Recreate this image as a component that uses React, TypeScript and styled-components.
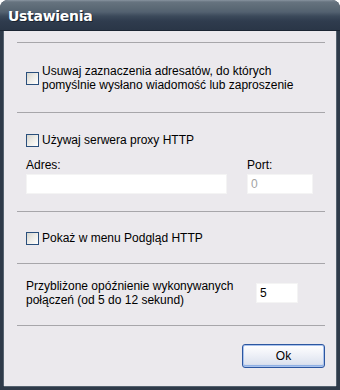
import React from "react";
import styled, { createGlobalStyle } from "styled-components";

const Global = createGlobalStyle`
  html, body { margin: 0; padding: 0; background: #ffffff; }
  body { font-family: "Liberation Sans", Arial, sans-serif; font-size: 12px; color: #000; }
  * { box-sizing: border-box; }
`;

const Window = styled.div`
  width: 340px;
  height: 390px;
  display: flex;
  flex-direction: column;
  background: #2e3a49;
  border-radius: 8px 8px 0 0;
  overflow: hidden;
`;

const TitleBar = styled.div`
  height: 31px;
  flex: none;
  display: flex;
  align-items: center;
  padding: 1px 0 0 8px;
  background: linear-gradient(
    to bottom,
    #8894a0 0px,
    #66737f 2px,
    #5b6975 8px,
    #536170 12px,
    #3c4a5b 16px,
    #2f3c4e 21px,
    #2a3647 30px
  );
  border-bottom: 1px solid #1b2532;
`;

const Title = styled.span`
  font-family: "DejaVu Sans", "Liberation Sans", sans-serif;
  font-weight: bold;
  font-size: 14px;
  letter-spacing: -0.3px;
  color: #ffffff;
  text-shadow: 1px 1px 0 #1a2330;
`;

const Body = styled.div`
  flex: 1;
  margin: 0 4px 4px 4px;
  background: #ebe9ed;
  box-shadow: -1px 0 0 #55626f, 1px 0 0 #55626f, 0 1px 0 #55626f;
  display: flex;
  flex-direction: column;
  padding: 11px 10px 0 13px;
`;

const Separator = styled.div<{ $top: number }>`
  height: 1px;
  background: #a7a6aa;
  margin-top: ${(p) => p.$top}px;
  margin-right: 1px;
  flex: none;
`;

const CheckRow = styled.label<{ $top: number }>`
  display: flex;
  align-items: center;
  gap: 3px;
  margin: ${(p) => p.$top}px 0 0 9px;
  line-height: 14px;
`;

const Box = styled.span`
  width: 13px;
  height: 13px;
  flex: none;
  border: 1px solid #2a4f7c;
  background: linear-gradient(135deg, #d4d4ce 0%, #ecebe6 45%, #ffffff 100%);
`;

const Text = styled.span`
  line-height: 14px;
`;

const FieldGrid = styled.div`
  display: grid;
  grid-template-columns: 201px 66px;
  column-gap: 20px;
  row-gap: 2px;
  margin: 11px 0 0 9px;
`;

const FieldLabel = styled.span`
  line-height: 14px;
`;

const Input = styled.div<{ $disabled?: boolean }>`
  height: 20px;
  background: #ffffff;
  border: 1px solid #f4f4f4;
  padding-left: 3px;
  display: flex;
  align-items: center;
  color: ${(p) => (p.$disabled ? "#a3a3a3" : "#000")};
`;

const DelayRow = styled.div`
  display: flex;
  align-items: center;
  margin: 15px 0 0 9px;
`;

const DelayText = styled.span`
  width: 230px;
  line-height: 14px;
`;

const SmallInput = styled(Input)`
  width: 42px;
`;

const Footer = styled.div`
  display: flex;
  justify-content: flex-end;
  margin: 18px 1px 0 0;
`;

const Button = styled.button`
  width: 83px;
  height: 24px;
  font-family: "Liberation Sans", Arial, sans-serif;
  font-size: 12px;
  color: #000;
  border: 1px solid #2c56a0;
  border-radius: 3px;
  background: linear-gradient(to bottom, #ffffff 0%, #f0f2f8 40%, #dde3ef 85%, #c8d2e6 100%);
  box-shadow: inset 0 0 0 1px #a9c2ec, inset 0 -1px 0 1px #8fb0e4;
  padding: 0;
`;

export default function App() {
  return (
    <>
      <Global />
      <Window>
        <TitleBar>
          <Title>Ustawienia</Title>
        </TitleBar>
        <Body>
          <Separator $top={0} />
          <CheckRow $top={21}>
            <Box />
            <Text>
              Usuwaj zaznaczenia adresatów, do których
              <br />
              pomyślnie wysłano wiadomość lub zaproszenie
            </Text>
          </CheckRow>
          <Separator $top={20} />
          <CheckRow $top={20}>
            <Box />
            <Text>Używaj serwera proxy HTTP</Text>
          </CheckRow>
          <FieldGrid>
            <FieldLabel>Adres:</FieldLabel>
            <FieldLabel>Port:</FieldLabel>
            <Input />
            <Input $disabled>0</Input>
          </FieldGrid>
          <Separator $top={17} />
          <CheckRow $top={19}>
            <Box />
            <Text>Pokaż w menu Podgląd HTTP</Text>
          </CheckRow>
          <Separator $top={18} />
          <DelayRow>
            <DelayText>
              Przybliżone opóźnienie wykonywanych
              <br />
              połączeń (od 5 do 12 sekund)
            </DelayText>
            <SmallInput>5</SmallInput>
          </DelayRow>
          <Separator $top={18} />
          <Footer>
            <Button>Ok</Button>
          </Footer>
        </Body>
      </Window>
    </>
  );
}
